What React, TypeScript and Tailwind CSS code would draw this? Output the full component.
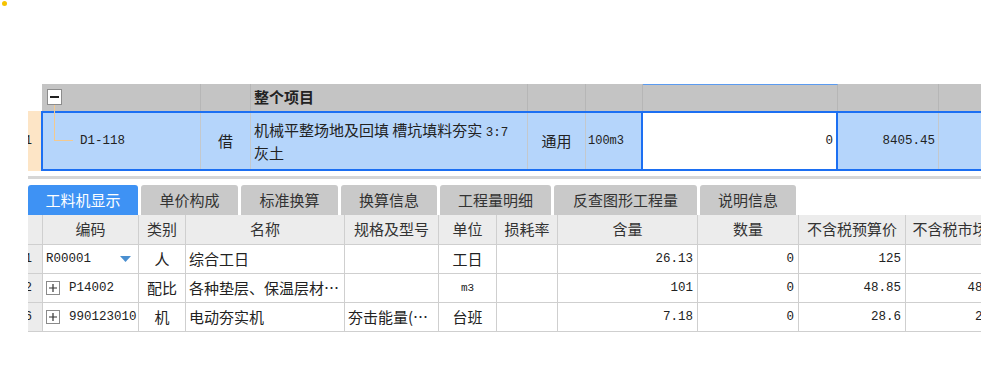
import React from "react";

const cjk = "font-['Noto_Sans_CJK_SC','Liberation_Sans',sans-serif]";
const mono = "font-['Liberation_Mono','Noto_Sans_CJK_SC',monospace]";

const tabs: { label: string; w: string; active?: boolean }[] = [
  { label: "工料机显示", w: "w-[110px]", active: true },
  { label: "单价构成", w: "w-[97px]" },
  { label: "标准换算", w: "w-[97px]" },
  { label: "换算信息", w: "w-[96px]" },
  { label: "工程量明细", w: "w-[111px]" },
  { label: "反查图形工程量", w: "w-[143px]" },
  { label: "说明信息", w: "w-[96px]" },
];

const colW = [
  "w-[15px]",
  "w-[96px]",
  "w-[47px]",
  "w-[159px]",
  "w-[94px]",
  "w-[58px]",
  "w-[61px]",
  "w-[140px]",
  "w-[101px]",
  "w-[107px]",
  "w-[104px]",
];

const headers = ["", "编码", "类别", "名称", "规格及型号", "单位", "损耗率", "含量", "数量", "不含税预算价", "不含税市场价"];

function PlusBox() {
  return (
    <span className="inline-flex w-[14px] h-[14px] border border-[#8a8a8a] bg-white items-center justify-center mr-[9px] shrink-0">
      <svg width="10" height="10" viewBox="0 0 10 10">
        <path d="M5 1v8M1 5h8" stroke="#333" strokeWidth="1.2" />
      </svg>
    </span>
  );
}

type Cell = { t?: React.ReactNode; a?: "l" | "c" | "r"; f?: "m" | "c"; small?: boolean };

const rows: { num: string; cells: Cell[] }[] = [
  {
    num: "1",
    cells: [
      {
        t: (
          <span className="flex items-center w-full">
            <span className={mono + " text-[12.5px]"}>R00001</span>
            <svg width="11" height="6" viewBox="0 0 11 6" className="ml-[29px]">
              <path d="M0 0h11L5.5 6z" fill="#4a8fd0" />
            </svg>
          </span>
        ),
        a: "l",
      },
      { t: "人", a: "c", f: "c" },
      { t: "综合工日", a: "l", f: "c" },
      { t: "" },
      { t: "工日", a: "c", f: "c" },
      { t: "" },
      { t: "26.13", a: "r", f: "m" },
      { t: "0", a: "r", f: "m" },
      { t: "125", a: "r", f: "m" },
      { t: "" },
    ],
  },
  {
    num: "2",
    cells: [
      {
        t: (
          <span className="flex items-center">
            <PlusBox />
            <span className={mono + " text-[12.5px]"}>P14002</span>
          </span>
        ),
        a: "l",
      },
      { t: "配比", a: "c", f: "c" },
      { t: "各种垫层、保温层材…", a: "l", f: "c" },
      { t: "" },
      { t: "m3", a: "c", f: "m", small: true },
      { t: "" },
      { t: "101", a: "r", f: "m" },
      { t: "0", a: "r", f: "m" },
      { t: "48.85", a: "r", f: "m" },
      { t: "48.85", a: "r", f: "m" },
    ],
  },
  {
    num: "6",
    cells: [
      {
        t: (
          <span className="flex items-center">
            <PlusBox />
            <span className={mono + " text-[12.5px]"}>990123010</span>
          </span>
        ),
        a: "l",
      },
      { t: "机", a: "c", f: "c" },
      { t: "电动夯实机", a: "l", f: "c" },
      { t: "夯击能量(…", a: "l", f: "c" },
      { t: "台班", a: "c", f: "c" },
      { t: "" },
      { t: "7.18", a: "r", f: "m" },
      { t: "0", a: "r", f: "m" },
      { t: "28.6", a: "r", f: "m" },
      { t: "28.6", a: "r", f: "m" },
    ],
  },
];

export default function App() {
  return (
    <div className="relative w-[981px] h-[367px] bg-white overflow-hidden text-[#222]">
      {/* yellow dot */}
      <div className="absolute left-[2px] top-[1px] w-[5px] h-[5px] rounded-full bg-[#f6c300]" />

      <div className="pt-[84px] pl-[28px] flex flex-col">
        {/* top table */}
        <div className="relative flex flex-col w-[1000px]">
          {/* header row */}
          <div className="flex h-[27px]">
            <div className="w-[14px] bg-white" />
            <div className="flex flex-1 bg-[#c4c4c4]">
              <div className="w-[159px] border-r border-[#b6b6b6] flex items-start pl-[5px] pt-[5px]">
                <span className="w-[15px] h-[16px] border border-[#8c8c8c] bg-white flex items-center justify-center">
                  <span className="block w-[9px] h-[1.5px] bg-[#222]" />
                </span>
              </div>
              <div className="w-[50px] border-r border-[#b6b6b6]" />
              <div className={"w-[277px] border-r border-[#b6b6b6] flex items-center pl-[3px] font-bold text-[15px] " + cjk}>
                整个项目
              </div>
              <div className="w-[58px] border-r border-[#b6b6b6]" />
              <div className="w-[57px] border-r border-[#b6b6b6]" />
              <div className="w-[195px] border-r border-[#b6b6b6] border-t border-t-[#5b9bf0]" />
              <div className="w-[101px] border-r border-[#b6b6b6]" />
              <div className="flex-1" />
            </div>
          </div>
          {/* data row */}
          <div className="flex h-[60px]">
            <div className={"w-[13px] bg-[#fde5c6] overflow-hidden flex items-center justify-end pr-[9px] text-[12.5px] " + mono}>
              <span>1</span>
            </div>
            <div className="flex flex-1 border-2 border-[#1c6ff2] bg-[#b5d5fb]">
              <div className={"w-[158px] border-r border-[#c4c8cc] flex items-center pl-[37px] text-[12.5px] " + mono}>D1-118</div>
              <div className={"w-[50px] border-r border-[#c4c8cc] flex items-center justify-center text-[15px] " + cjk}>借</div>
              <div className={"w-[277px] border-r border-[#c4c8cc] flex flex-col justify-center pl-[3px] text-[15px] leading-[19px] " + cjk}>
                <span>
                  机械平整场地及回填 槽坑填料夯实 <span className={mono + " text-[12.5px]"}>3:7</span>
                </span>
                <span>灰土</span>
              </div>
              <div className={"w-[58px] border-r border-[#c4c8cc] flex items-center justify-center text-[15px] " + cjk}>通用</div>
              <div className={"w-[55px] flex items-center pl-[2px] text-[12px] " + mono}>100m3</div>
              <div className={"w-[197px] border-2 border-[#1c6ff2] -my-[2px] bg-white flex items-center justify-end pr-[3px] text-[12.5px] " + mono}>0</div>
              <div className={"w-[101px] border-r border-[#c4c8cc] flex items-center justify-end pr-[3px] text-[12.5px] " + mono}>8405.45</div>
              <div className="flex-1" />
            </div>
          </div>
          {/* tree connector */}
          <div className="absolute left-[26px] top-[21px] w-[19px] h-[36px] border-l border-b border-[#f3c98f]" />
        </div>

        {/* separator */}
        <div className="h-[5px]" />
        <div className="h-[3px] bg-[#d6d6d6] w-[1000px]" />
        <div className="h-[6px]" />

        {/* tabs */}
        <div className="flex gap-[3px] h-[30px]">
          {tabs.map((t) => (
            <div
              key={t.label}
              className={
                t.w +
                " rounded-t-[3px] flex items-center justify-center text-[15px] " +
                cjk +
                (t.active ? " bg-[#3e92f4] text-white" : " bg-[#c9c9c9] text-[#333]")
              }
            >
              {t.label}
            </div>
          ))}
        </div>

        {/* bottom grid */}
        <div className="flex flex-col w-[1010px]">
          <div className="flex h-[30px] bg-[#ececec] border-b border-[#cfcfcf]">
            {headers.map((h, i) => (
              <div
                key={i}
                className={
                  colW[i] +
                  " shrink-0 border-r border-[#cfcfcf] flex items-center justify-center text-[15px] text-[#333] whitespace-nowrap overflow-hidden " +
                  cjk
                }
              >
                {h}
              </div>
            ))}
          </div>
          {rows.map((r) => (
            <div key={r.num} className="flex h-[29px] border-b border-[#cfcfcf] bg-white">
              <div className={"w-[15px] shrink-0 bg-[#ececec] border-r border-[#cfcfcf] overflow-hidden flex items-center justify-end pr-[10px] text-[12.5px] " + mono}>
                <span>{r.num}</span>
              </div>
              {r.cells.map((c, i) => (
                <div
                  key={i}
                  className={
                    colW[i + 1] +
                    " shrink-0 border-r border-[#cfcfcf] flex items-center whitespace-nowrap overflow-hidden " +
                    (c.a === "c" ? "justify-center " : c.a === "r" ? "justify-end pr-[4px] " : "pl-[3px] ") +
                    (c.f === "m" ? mono + (c.small ? " text-[11px]" : " text-[12.5px]") : c.f === "c" ? cjk + " text-[15px]" : "")
                  }
                >
                  {c.t}
                </div>
              ))}
            </div>
          ))}
        </div>
      </div>
    </div>
  );
}
